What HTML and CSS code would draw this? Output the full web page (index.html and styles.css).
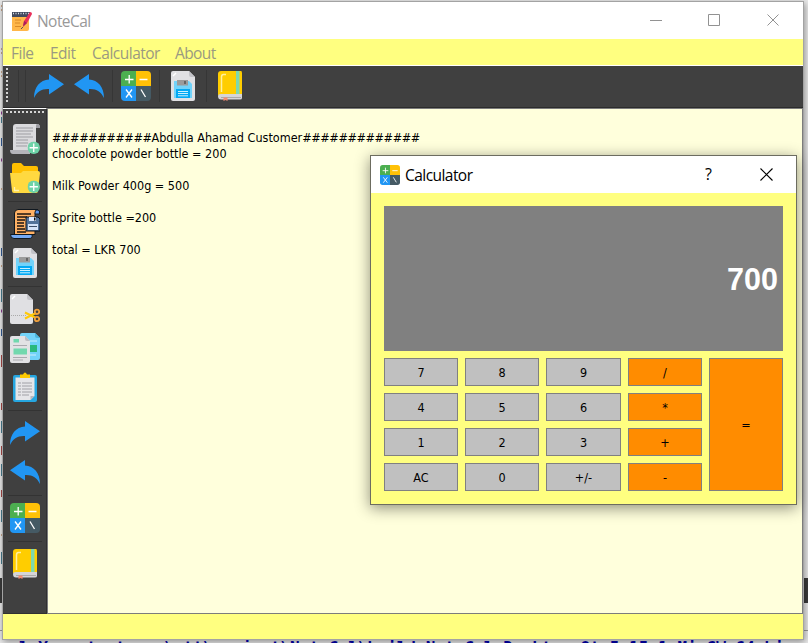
FILE: index.html
```
<!DOCTYPE html>
<html lang="en">
<head>
<meta charset="utf-8">
<title>NoteCal</title>
<link rel="stylesheet" href="styles.css">
</head>
<body>
<svg width="0" height="0" class="defs">
  <symbol id="redo" viewBox="0 0 30 30"><path d="M15 3 30 13.2 15 23.500V18C8 17.500 3 20.500 0 27 0 16 6 9 15 8.500Z" fill="#2196f3"/></symbol>
  <symbol id="undo" viewBox="0 0 30 30"><path d="M15 3 0 13.2 15 23.500V18C22 17.500 27 20.500 30 27 30 16 24 9 15 8.500Z" fill="#2196f3"/></symbol>
  <symbol id="calc" viewBox="0 0 30 30">
    <path d="M15 0H4a4 4 0 0 0-4 4v11h15Z" fill="#4caf50"/><path d="M15 0h11a4 4 0 0 1 4 4v11H15Z" fill="#ffc107"/>
    <path d="M0 15h15v15H4a4 4 0 0 1-4-4Z" fill="#2196f3"/><path d="M15 15h15v11a4 4 0 0 1-4 4H15Z" fill="#455a64"/>
    <path d="M4 8.500h8.500M8.200 4v8.500M18.500 8.500h8M5 18.500l6 8M11 18.500l-6 8M20 18.500l4.500 7.500" stroke="#fff" stroke-width="1.300" fill="none"/>
  </symbol>
  <symbol id="save" viewBox="0 0 30 30">
    <path d="M5 0h16l6 6v22q0 2-2 2H5q-2 0-2-2V2q0-2 2-2Z" fill="#e0e0e3"/><path d="M21 0v4q0 2 2 2h4Z" fill="#c3c3c8"/>
    <path d="M6 10h15l3 3v14H6Z" fill="#72d3fa"/><path d="M9 9h11v5.500H9Z" fill="#9b9b9b"/><path d="M16 10h2v3h-2Z" fill="#666"/>
    <path d="M8 18h14v9H8Z" fill="#03a9f4"/><path d="M10 20.500h10M10 22.500h10M10 24.800h10" stroke="#c9f0ff"/>
    <path d="M5 5 8 2" stroke="#fff" stroke-width="1.500"/>
  </symbol>
  <symbol id="book" viewBox="0 0 30 30">
    <path d="M6 0h20q1 0 1 2v22H3V3q0-3 3-3Z" fill="#ffcd00"/><path d="M21 0h3.500v24H21Z" fill="#7dd8ae"/>
    <path d="M3 25q0-2 3-2h21v4q0 1.500-2 1.500H6q-3 0-3-3.500Z" fill="#d5d5d8"/><path d="M6 26.500h20" stroke="#aaa"/>
    <path d="M6.500 21V6q0-2.500 2-2.500H11" stroke="#fff0a0" stroke-width="1.500" fill="none"/><path d="M8.500 26.500h4V30l-2-1-2 1Z" fill="#f38b72"/>
  </symbol>
  <symbol id="plus" viewBox="0 0 12 12"><circle cx="6" cy="6" r="6" fill="#6dd3a8"/><path d="M2 6h8M6 2v8" stroke="#fff" stroke-width="1.300"/></symbol>
  <symbol id="newdoc" viewBox="0 0 30 30">
    <path d="M6 0h21q3 0 3 4h-4v23H3V3q0-3 3-3Z" fill="#dadadd"/><path d="M27 0q3 0 3 4h-4V2q0-2 1-2Z" fill="#9c9ca2"/>
    <path d="M0 26h20v4H3q-3 0-3-4Z" fill="#b4b4ba"/><path d="M6 4h17M6 7h17M6 10h15M6 13h17M6 16h12M6 19h12M6 22h11" stroke="#96969c" stroke-width=".9"/>
    <use href="#plus" x="17.500" y="17.500" width="12.500" height="12.500"/>
  </symbol>
  <symbol id="folder" viewBox="0 0 30 30">
    <path d="M2 10V2q0-2 2-2h7l3 3h12q2 0 2 2v5Z" fill="#ffbf00"/><path d="M0 10h11l2-2h15q2 0 2 2l-2 18q0 2-2 2H4q-2 0-2-2Z" fill="#ffd940"/>
    <path d="M4.500 24v3.500H9" stroke="#fff3b0" stroke-width="1.300" fill="none"/><use href="#plus" x="17.500" y="17.500" width="12.500" height="12.500"/>
  </symbol>
  <symbol id="script" viewBox="0 0 30 30">
    <g stroke="#101820" stroke-width="1"><path d="M8 .5h20q2 1 1 4h-4v21H4.500V4q0-3 3.500-3.500Z" fill="#ffb164"/><path d="M26 1h2q2 0 1.500 4H25V3Z" fill="#5c94e8"/>
    <path d="M.5 25.500H22q1 4-3 4H4q-3.500 0-3.500-4Z" fill="#74aaf5"/></g>
    <path d="M7 5h14M7 8h10M7 11h8M7 14h7M7 17h7M7 20h8M7 23h9" stroke="#1c1510" stroke-width="1.300"/>
    <path d="M16 8h12l2 2v12H16Z" fill="#527399" stroke="#0b131c"/><path d="M19 8h7v4h-7Z" fill="#dceaff"/><path d="M24 8.500h1.500v3H24Z" fill="#111"/><path d="M18 15h10v6H18Z" fill="#d3e2f7"/><path d="M19 17.500h8" stroke="#3b4d66"/>
  </symbol>
  <symbol id="cut" viewBox="0 0 30 30">
    <path d="M2 0h15l6 6v22q0 2-2 2H2q-2 0-2-2V2q0-2 2-2Z" fill="#e0e0e3"/><path d="M17 0v4q0 2 2 2h4Z" fill="#c3c3c8"/>
    <path d="M2 5 5 2" stroke="#fff" stroke-width="1.500"/><path d="M1 21.500h15" stroke="#aaa" stroke-dasharray="1 1"/>
    <path d="M15 18.500 25 23.500M15 24.500 26 19" stroke="#ffc908" stroke-width="2"/>
    <g fill="none" stroke="#f2a13c" stroke-width="1.800"><circle cx="27" cy="17.800" r="2.200"/><circle cx="27" cy="25" r="2.200"/></g>
  </symbol>
  <symbol id="copy" viewBox="0 0 30 30">
    <path d="M12 0h13l5 5v20q0 2-2 2H10V2q0-2 2-2Z" fill="#72d3fa"/><path d="M25 0v3q0 2 2 2h3Z" fill="#4bb6dd"/><path d="M20 8h7M20 22h6" stroke="#cbeefb"/><path d="M19 12h8v7h-8Z" fill="#29b87d"/>
    <path d="M2 3h13l5 5v20q0 2-2 2H2q-2 0-2-2V5q0-2 2-2Z" fill="#e2e2e5"/><path d="M15 3v3q0 2 2 2h3Z" fill="#bcbcc2"/>
    <path d="M3.500 6H9v3.500H3.500ZM3.500 15.500H17v6H3.500Z" fill="#71d8ae"/><path d="M3 12.500h14M3 24.500h14M3 27h10" stroke="#aaaab0"/>
  </symbol>
  <symbol id="clip" viewBox="0 0 30 30">
    <path d="M5 3h20q2 0 2 2v23q0 2-2 2H5q-2 0-2-2V5q0-2 2-2Z" fill="#26a6e0"/><path d="M5.500 5.500h19V24l-4 4h-15Z" fill="#e5e5e8"/><path d="M20.500 28v-4h4Z" fill="#b6b6bc"/>
    <path d="M8 11h3M12 11h10M8 14h3M12 14h10M8 17h3M12 17h10M8 20h3M12 20h10M8 23h3M12 23h7" stroke="#a0a0a6"/>
    <path d="M10 2.500h3q2-4 4 0h3V6H10Z" fill="#ffca00"/>
  </symbol>
  <symbol id="note" viewBox="0 0 20 20">
    <path d="M0 2h17v16q0 2-2 2H0Z" fill="#ffb74a"/><path d="M0 1h18v5H0Z" fill="#424a5e"/><path d="M1 2.500h17" stroke="#d8dce3" stroke-width="1.500" stroke-dasharray="1 1.500"/>
    <path d="M3 9h6M3 12h5M3 15.500h6" stroke="#d98a29"/><path d="M12 10 18 1q2 0 2 2l-5 9-4 3Z" fill="#e92f5b"/><path d="m12 10 3 2-4 4Z" fill="#a91f5b"/><path d="m11 16-2 2" stroke="#555"/>
  </symbol>
</svg>

<svg class="backdrop" width="808" height="643" viewBox="0 0 808 643">
  <path d="M0 578h808v25H0Z" fill="#3b3b3b"/><path d="M0 630.500h808" stroke="#999"/>
  <path d="M1 6h1M1 10h1M1 49h1M1 53h1M1 72h1M1 76h1M1 189h1M1 266h1M1 535h1" stroke="#a3602d"/>
  <path d="M1 113h1M1 160h1M1 311h1" stroke="#8c3b90" stroke-width="3"/>
  <path d="M1 117h1v6H1ZM1 289h1v7H1ZM1 296h1v6H1ZM1 421h1v12H1ZM1 464h1v12H1ZM1 510h1v12H1ZM1 552h1v12H1Z" fill="#487e91"/>
  <path d="M1 138h1v8H1ZM1 248h1v8H1ZM1 329h1v7H1Z" fill="#315b96"/><path d="M1 355h1v12H1ZM1 403h1v7H1ZM1 446h1v9H1ZM1 490h1v7H1Z" fill="#a74745"/>
</svg>

<main class="window">
  <header class="titlebar">
    <svg class="app-icon"><use href="#note"/></svg>
    <span class="title">NoteCal</span>
    <svg class="controls" width="130" height="14"><path d="M0 6.500h12M58.500.5h11v11h-11ZM117.500.5l11 11M128.500.5l-11 11" fill="none" stroke="#929292"/></svg>
  </header>
  <nav class="menu"><span class="m1">File</span><span class="m2">Edit</span><span class="m3">Calculator</span><span class="m4">About</span></nav>
  <div class="toolbar top">
    <i class="handle"></i><i class="sep first"></i><i class="sep second"></i>
    <svg class="ic wide"><use href="#redo"/></svg><svg class="ic"><use href="#undo"/></svg><i class="sep"></i>
    <svg class="ic"><use href="#calc"/></svg><i class="sep"></i>
    <svg class="ic"><use href="#save"/></svg><i class="sep"></i>
    <svg class="ic"><use href="#book"/></svg>
  </div>
  <div class="work">
    <div class="toolbar side">
      <i class="handle"></i>
      <svg class="ic"><use href="#newdoc"/></svg><svg class="ic"><use href="#folder"/></svg><i class="sep"></i>
      <svg class="ic"><use href="#script"/></svg><svg class="ic"><use href="#save"/></svg><i class="sep"></i>
      <svg class="ic"><use href="#cut"/></svg><svg class="ic"><use href="#copy"/></svg><svg class="ic"><use href="#clip"/></svg><i class="sep"></i>
      <svg class="ic"><use href="#redo"/></svg><svg class="ic"><use href="#undo"/></svg><i class="sep"></i>
      <svg class="ic"><use href="#calc"/></svg><i class="sep"></i>
      <svg class="ic"><use href="#book"/></svg>
    </div>
    <div class="editor">
      <p><span class="hashes">###########</span>Abdulla Ahamad Customer<span class="hashes">#############</span></p>
      <p>chocolote powder bottle = 200</p>
      <p>&nbsp;</p>
      <p>Milk Powder 400g = 500</p>
      <p>&nbsp;</p>
      <p>Sprite bottle =200</p>
      <p>&nbsp;</p>
      <p>total = LKR 700</p>
    </div>
  </div>
  <footer class="status"></footer>
</main>

<svg class="console-strip" width="808" height="3" viewBox="0 640 808 3">
  <text class="console" x="19" y="652.500">l Yusertastores\qtt\project\NoteCal\build-NoteCal-Desktop_Qt_5_15_1_MinGW_64_bi</text>
</svg>

<section class="dialog">
  <header class="dialog-title">
    <svg class="app-icon"><use href="#calc"/></svg>
    <span class="title">Calculator</span><span class="help">?</span>
    <svg class="close" width="13" height="13"><path d="m.5.5 12 12M12.500.5l-12 12" stroke="#000" stroke-width="1.100"/></svg>
  </header>
  <div class="dialog-body">
    <div class="display">700</div>
    <div class="keys">
      <button>7</button><button>8</button><button>9</button><button class="op">/</button><button class="op equals">=</button>
      <button>4</button><button>5</button><button>6</button><button class="op">*</button>
      <button>1</button><button>2</button><button>3</button><button class="op">+</button>
      <button>AC</button><button>0</button><button>+/-</button><button class="op">-</button>
    </div>
  </div>
</section>
</body>
</html>
```
FILE: styles.css
```
* { box-sizing: border-box; }
body { margin: 0; width: 808px; height: 643px; overflow: hidden; background: #ebebeb; font-family: "DejaVu Sans Condensed", "DejaVu Sans", sans-serif; }
.defs { position: absolute; }
.backdrop { position: absolute; left: 0; top: 0; }
.console-strip { display: block; position: relative; }
.console { font: bold 16px "DejaVu Sans Mono", monospace; fill: #00008b; letter-spacing: .05px; }

.window { position: relative; width: 802px; height: 639px; margin: 1px 0 0 2px; border: 1px solid #a3a3a3; background: #fff; display: flex; flex-direction: column; box-shadow: 1px 2px 7px rgba(0,0,0,.4); }
.titlebar { height: 37px; padding-left: 9px; display: flex; align-items: center; color: #999; }
.app-icon { width: 20px; height: 20px; flex: none; }
.title { font: 15.5px "Open Sans", sans-serif; letter-spacing: -.55px; margin: 0 0 0 5px; }
.controls { margin: 0 23px 0 auto; }
.menu { height: 26px; background: #ffff80; display: flex; padding-left: 8px; font: 15.5px/28px "Open Sans", sans-serif; letter-spacing: -.5px; color: #9a9a80; }
.m1 { width: 39px; }
.m2 { width: 42px; }
.m3 { width: 83px; }
.m4 { letter-spacing: -.6px; }

.toolbar { background: #404040; display: flex; flex: none; }
.ic { width: 30px; height: 30px; flex: none; }
.top { height: 42px; margin-top: 1px; border-bottom: 1px solid #2c2c2c; padding: 5px 0 0 3px; }
.top .handle { width: 2px; height: 35px; margin-top: -3px; background: repeating-linear-gradient(#d4d4d4 0 2px, transparent 2px 4px); }
.top .sep { width: 1px; height: 32px; margin: -1px 8px 0; background: #363636; }
.top .sep.first { margin: -1px 0 0 10px; }
.top .sep.second { margin: -1px 8px 0 6px; }
.top .wide { margin-right: 10px; }

.work { display: flex; flex: 1; min-height: 0; }
.side { width: 44px; border-top: 1px solid #fff; border-right: 1px solid #303030; border-bottom: 1px solid #303030; flex-direction: column; padding: 2px 0 0 7px; }
.side .handle { width: 38px; height: 2px; margin: 0 0 11px -4px; flex: none; background: repeating-linear-gradient(90deg, #d4d4d4 0 2px, transparent 2px 4px); }
.side .ic { margin-bottom: 9px; }
.side .sep { width: 34px; height: 1px; flex: none; margin: -1px 0 7px -2px; background: #333; }
.editor { flex: 1; border: 1px solid #7c7c7c; background: #ffffdc; padding: 21px 4px; font-size: 12.5px; line-height: 16px; color: #000; }
.editor p { margin: 0; white-space: nowrap; }
.hashes { letter-spacing: -.38px; }
.status { height: 25px; background: #ffff80; }

.dialog { position: absolute; left: 370px; top: 155px; width: 427px; height: 350px; border: 1px solid #6c6c60; background: #ffff80; box-shadow: 0 3px 14px rgba(0,0,0,.45); }
.dialog-title { height: 37px; background: #fff; display: flex; align-items: center; padding-left: 9px; color: #000; }
.help { font: 16px "Open Sans", sans-serif; margin: -2px 48px 0 auto; }
.close { margin-right: 23px; }
.dialog-body { padding: 13px; }
.display { height: 145px; background: #808080; color: #fff; font: bold 30.5px/146px "Liberation Sans", sans-serif; text-align: right; padding-right: 5px; }
.keys { display: grid; grid-template-columns: 74px 74px 75px 74px 74px; grid-template-rows: repeat(4, 28px); gap: 7px; margin-top: 7px; }
button { margin: 0; padding: 0; border: 1px solid #808080; border-radius: 0; background: #c0c0c0; color: #000; font: 12.5px "DejaVu Sans Condensed", "DejaVu Sans", sans-serif; }
.op { background: #ff8c00; }
.equals { grid-column: 5; grid-row: 1 / 5; }
```
